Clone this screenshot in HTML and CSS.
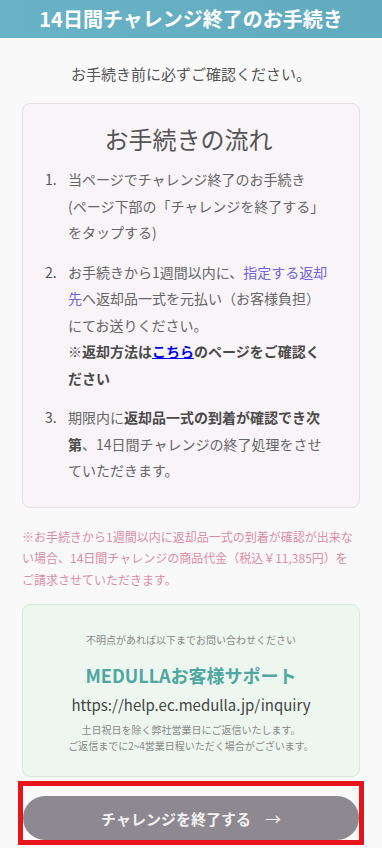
FILE: index.html
```html
<!DOCTYPE html>
<html lang="ja">
  <head>
    <meta charset="UTF-8" />
    <meta name="viewport" content="width=device-width, initial-scale=1.0" />
    <title>14日間チャレンジ終了のお手続き</title>
    <link rel="stylesheet" href="styles.css">
  </head>
  <body>
    <header class="page-header">
      <h1>14日間チャレンジ終了のお手続き</h1>
    </header>

    <main class="content">
      <p class="lead">お手続き前に必ずご確認ください。</p>

      <section class="flow-card">
        <h2 class="flow-title">お手続きの流れ</h2>
        <ol class="steps">
          <li class="step">
            <span class="step-num">1.</span>
            <div class="step-text">当ページでチャレンジ終了のお手続き<br>(ページ下部の「チャレンジを終了する」をタップする)</div>
          </li>
          <li class="step">
            <span class="step-num">2.</span>
            <div class="step-text">
              お手続きから1週間以内に、<a class="return-link" href="#">指定する返却先</a>へ返却品一式を元払い（お客様負担）にてお送りください。<br>
              <strong>※返却方法は<a class="here-link" href="#">こちら</a>のページをご確認ください</strong>
            </div>
          </li>
          <li class="step">
            <span class="step-num">3.</span>
            <div class="step-text">期限内に<strong>返却品一式の到着が確認でき次第</strong>、14日間チャレンジの終了処理をさせていただきます。</div>
          </li>
        </ol>
      </section>

      <p class="notice">※お手続きから1週間以内に返却品一式の到着が確認が出来ない場合、14日間チャレンジの商品代金（税込￥11,385円）をご請求させていただきます。</p>

      <section class="support-card">
        <p class="support-lead">不明点があれば以下までお問い合わせください</p>
        <div class="support-name">MEDULLAお客様サポート</div>
        <div class="support-url">https://help.ec.medulla.jp/inquiry</div>
        <p class="support-note">土日祝日を除く弊社営業日にご返信いたします。<br>ご返信までに2~4営業日程いただく場合がございます。</p>
      </section>

      <div class="cta">
        <button class="end-button" type="button">チャレンジを終了する<span class="arrow">→</span></button>
      </div>
    </main>
  </body>
</html>
```

FILE: styles.css
```css
* {
  box-sizing: border-box;
}

body {
  margin: 0;
  background: #f9f9f9;
  color: #555;
  font-family: 'Noto Sans CJK JP', 'Noto Sans', sans-serif;
}

.page-header {
  height: 38px;
  display: flex;
  align-items: center;
  justify-content: center;
  background: linear-gradient(to right, #6ab3c6, #62aabe);
}

.page-header h1 {
  margin: 0;
  font-size: 20px;
  font-weight: bold;
  color: #fff;
  line-height: 1;
}

.content {
  padding: 0 22px;
}

.lead {
  margin: 25px 0 18px;
  font-size: 15px;
  line-height: 22px;
  text-align: center;
  color: #555;
}

.flow-card {
  background: #f8f4f8;
  border: 1px solid #e7dde7;
  border-radius: 8px;
  padding: 17px 27px 23px 22px;
}

.flow-title {
  margin: 0 0 9px;
  font-size: 24px;
  font-weight: normal;
  line-height: 36px;
  text-align: center;
  color: #555;
}

.steps {
  list-style: none;
  margin: 0;
  padding: 0;
}

.step {
  display: flex;
  font-size: 14px;
  line-height: 26.5px;
  color: #666;
}

.step + .step {
  margin-top: 13px;
}

.step-num {
  flex: 0 0 23px;
  color: #555;
}

.step-text {
  flex: 1;
}

.step-text strong {
  color: #4a4a4a;
}

.return-link {
  color: #7065d8;
  text-decoration: none;
}

.here-link {
  color: #0000ee;
  text-decoration: underline;
}

.notice {
  margin: 18px 0 14px;
  padding-right: 6px;
  font-size: 12px;
  line-height: 21.6px;
  color: #d98ea6;
}

.support-card {
  background: #eef7ef;
  border: 1px solid #d6ecd9;
  border-radius: 8px;
  padding: 27px 10px 22px;
  text-align: center;
}

.support-lead {
  margin: 0;
  font-size: 10px;
  line-height: 16px;
  color: #888;
}

.support-name {
  margin-top: 14px;
  font-size: 18px;
  font-weight: bold;
  line-height: 26px;
  color: #4fa7a1;
}

.support-url {
  margin-top: 5px;
  font-size: 15px;
  line-height: 24px;
  color: #444;
}

.support-note {
  margin: 5px 0 0;
  font-size: 10px;
  line-height: 16px;
  color: #888;
}

.cta {
  margin: 4px -4px 0;
  border: 5px solid #e8141c;
  padding-top: 10px;
}

.end-button {
  display: flex;
  align-items: center;
  justify-content: center;
  width: 100%;
  height: 44px;
  border: none;
  border-radius: 22px;
  background: #8c8990;
  color: #f2f2f2;
  font-family: inherit;
  font-size: 15px;
  font-weight: bold;
  cursor: pointer;
}

.arrow {
  margin-left: 14px;
  font-weight: normal;
  font-size: 16px;
}
```
